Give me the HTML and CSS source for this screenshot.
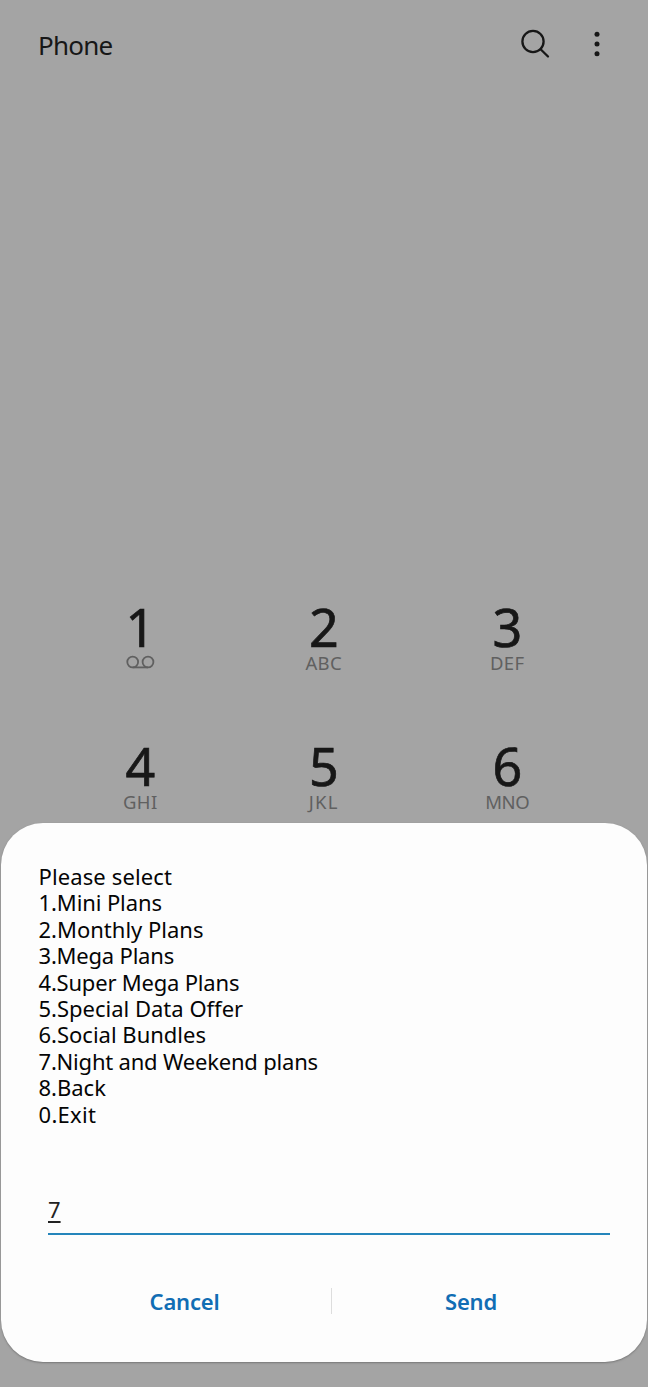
FILE: index.html
```
<!DOCTYPE html>
<html lang="en">
<head>
<meta charset="utf-8">
<title>Phone</title>
<link rel="stylesheet" href="styles.css">
</head>
<body>
<main class="screen">
  <header class="bar">
    <h1 class="title">Phone</h1>
    <svg class="search" width="32" height="32" viewBox="0 0 32 32"><circle cx="13" cy="13.5" r="10.6"/><path d="M20.6 21.2l7.4 7.3"/></svg>
    <svg class="more" width="8" height="28" viewBox="0 0 8 28"><circle cx="4" cy="4.3" r="2.5"/><circle cx="4" cy="14" r="2.5"/><circle cx="4" cy="23.8" r="2.5"/></svg>
  </header>
  <section class="keypad">
    <div class="key"><span class="digit">1</span><svg class="voicemail" width="30" height="16" viewBox="0 0 30 16"><circle cx="7.7" cy="8" r="5.4"/><circle cx="23" cy="8" r="5.4"/><path d="M7.7 13.4h15.3"/></svg></div>
    <div class="key"><span class="digit">2</span><span class="letters">ABC</span></div>
    <div class="key"><span class="digit">3</span><span class="letters">DEF</span></div>
    <div class="key"><span class="digit">4</span><span class="letters">GHI</span></div>
    <div class="key"><span class="digit">5</span><span class="letters jkl">JKL</span></div>
    <div class="key"><span class="digit">6</span><span class="letters mno">MNO</span></div>
  </section>
  <section class="dialog" role="dialog">
    <div class="message">
      <div class="line loose">Please select</div>
      <div class="line snug">1.Mini Plans</div>
      <div class="line">2.Monthly Plans</div>
      <div class="line tight">3.Mega Plans</div>
      <div class="line tight">4.Super Mega Plans</div>
      <div class="line">5.Special Data Offer</div>
      <div class="line">6.Social Bundles</div>
      <div class="line tight">7.Night and Weekend plans</div>
      <div class="line">8.Back</div>
      <div class="line wide">0.Exit</div>
    </div>
    <div class="field"><span class="value">7</span></div>
    <div class="actions">
      <div class="action cancel">Cancel</div>
      <div class="divider"></div>
      <div class="action send">Send</div>
    </div>
  </section>
</main>
</body>
</html>
```

FILE: styles.css
```
body { margin: 0; }
.screen {
  position: relative;
  display: flex;
  flex-direction: column;
  width: 648px;
  height: 1387px;
  overflow: hidden;
  background: #a4a4a4;
  color: #171717;
  font-family: "Noto Sans", sans-serif;
}
.bar {
  display: flex;
  align-items: center;
  height: 88px;
  padding: 0 47px 0 38px;
}
.title {
  flex: 1;
  margin: 2px 0 0;
  font-size: 26px;
  font-weight: 400;
  letter-spacing: -0.75px;
}
.search { margin-right: 41px; fill: none; stroke: #171717; stroke-width: 2.3; stroke-linecap: round; }
.more { fill: #171717; }
.keypad {
  display: grid;
  grid-template-columns: repeat(3, 183.5px);
  grid-auto-rows: 139px;
  margin: 510px 0 0 48.5px;
}
.key { display: flex; flex-direction: column; align-items: center; }
.digit { height: 54px; font-size: 52px; line-height: 58px; -webkit-text-stroke: 0.7px #171717; }
.letters { font-size: 18.5px; line-height: 22px; letter-spacing: 0.4px; color: #606060; }
.jkl { letter-spacing: 1.2px; }
.mno { letter-spacing: -0.4px; }
.voicemail { margin-top: 2px; fill: none; stroke: #606060; stroke-width: 1.8; }
.dialog {
  position: absolute;
  left: 1px;
  top: 823px;
  box-sizing: border-box;
  width: 646px;
  height: 539px;
  padding: 40px 37px 0;
  border-radius: 42px;
  background: #fdfdfd;
  box-shadow: 0 1px 2px #777;
  color: #050505;
}
.message { padding-left: 0.5px; font-size: 22px; line-height: 26.4px; white-space: nowrap; }
.loose { letter-spacing: 0.12px; }
.wide { letter-spacing: 0.3px; }
.snug { letter-spacing: -0.1px; }
.tight { letter-spacing: -0.2px; }
.field {
  height: 39px;
  margin: 67px 0 0 10px;
  border-bottom: 2px solid #2585bb;
  color: #222;
  font-size: 22px;
  line-height: 31px;
}
.value { text-decoration: underline; text-decoration-thickness: 1.5px; text-underline-offset: 3px; }
.actions { display: flex; align-items: center; height: 40px; margin-top: 46px; }
.action { text-align: center; color: #116db4; font-size: 22px; font-weight: 600; letter-spacing: -0.2px; }
.cancel { flex: 0 0 293px; }
.send { flex: 1; }
.divider { width: 1px; height: 26px; background: #ddd; }
```
